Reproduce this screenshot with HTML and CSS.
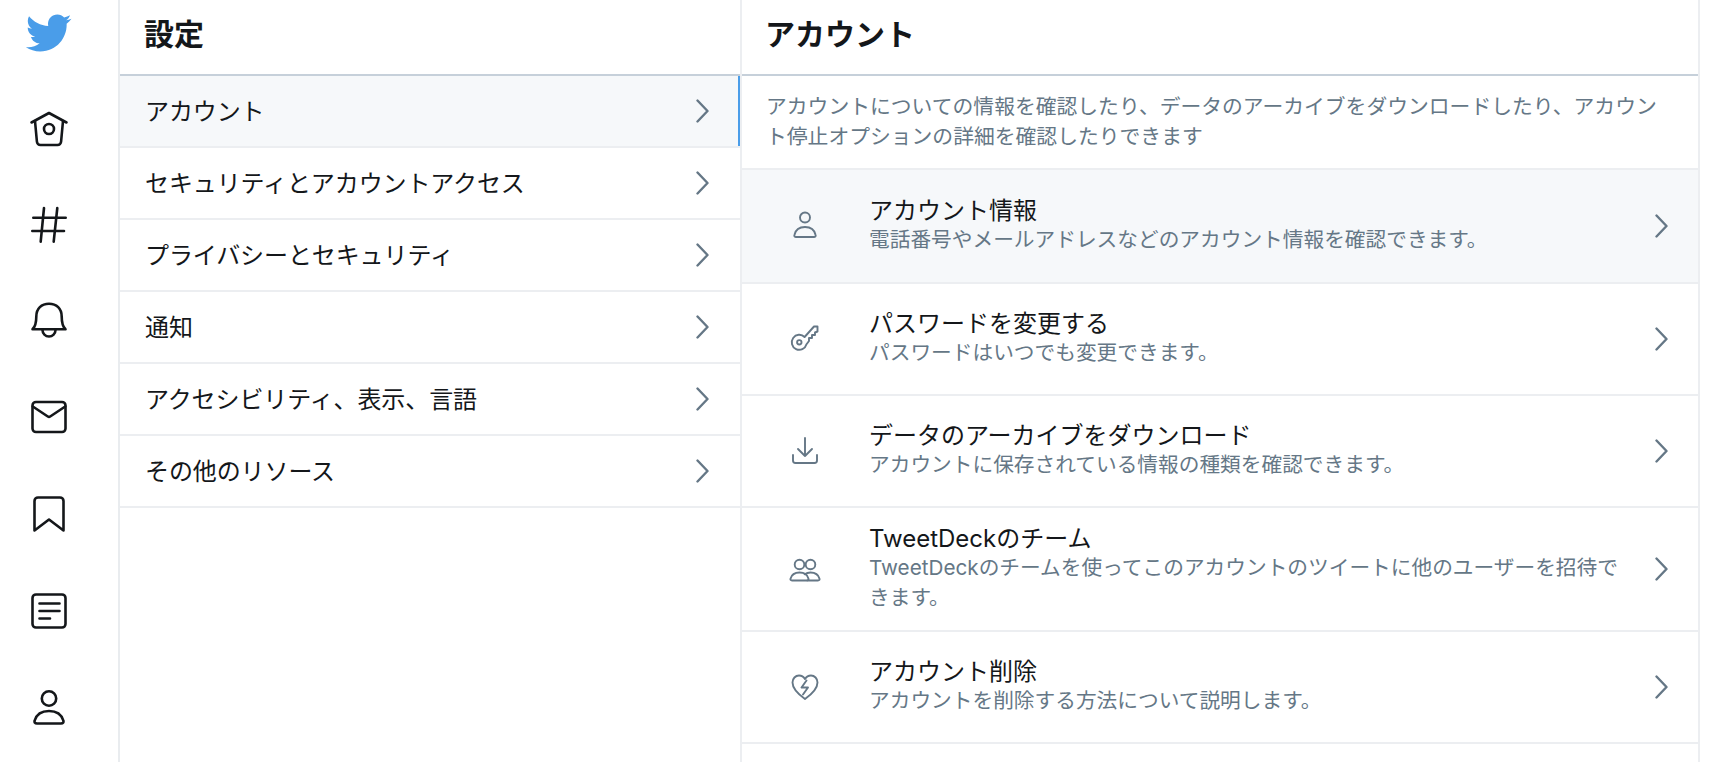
FILE: index.html
```html
<!DOCTYPE html>
<html lang="ja">
<head>
<meta charset="utf-8">
<title>設定</title>
<link rel="stylesheet" href="styles.css">
</head>
<body>
<div class="app">
  <nav class="rail">
    <div class="brand">
      <svg class="bird" viewBox="0 0 24 24"><path d="M23.643 4.937c-.835.37-1.732.62-2.675.733.962-.576 1.7-1.49 2.048-2.578-.9.534-1.897.922-2.958 1.13-.85-.904-2.06-1.47-3.4-1.47-2.572 0-4.658 2.086-4.658 4.66 0 .364.042.718.12 1.06-3.873-.195-7.304-2.05-9.602-4.868-.4.69-.63 1.49-.63 2.342 0 1.616.823 3.043 2.072 3.878-.764-.025-1.482-.234-2.11-.583v.06c0 2.257 1.605 4.14 3.737 4.568-.392.106-.803.162-1.227.162-.3 0-.593-.028-.877-.082.593 1.85 2.313 3.198 4.352 3.234-1.595 1.25-3.604 1.995-5.786 1.995-.376 0-.747-.022-1.112-.065 2.062 1.323 4.51 2.093 7.14 2.093 8.57 0 13.255-7.098 13.255-13.254 0-.2-.005-.402-.014-.602.91-.658 1.7-1.477 2.323-2.41z"/></svg>
    </div>
    <div class="rail-item"><svg class="rail-icon" viewBox="0 0 40 40"><path d="M2.500 13.500 20 4l17.500 9.500"/><path d="M6 12l1.900 20.500a3.600 3.600 0 0 0 3.600 3.500h17a3.600 3.600 0 0 0 3.600-3.500L34 12"/><circle cx="20" cy="20" r="5"/></svg></div>
    <div class="rail-item"><svg class="rail-icon" viewBox="0 0 40 40"><path d="M15 3l-3.300 33.700M28.300 3 24.700 36.700M4.300 12.700H36.700M3.300 26H35"/></svg></div>
    <div class="rail-item"><svg class="rail-icon" viewBox="0 0 40 40"><path d="M3.500 28.300C6.500 25.500 7.300 22 7.300 15.500 7.300 7.500 12.500 2.800 20 2.800s12.700 4.700 12.700 12.700c0 6.500.8 10 3.800 12.800z"/><path d="M13.500 29a6.500 6.500 0 0 0 13 0"/></svg></div>
    <div class="rail-item"><svg class="rail-icon" viewBox="0 0 40 40"><rect x="3.500" y="4" width="33" height="30" rx="3.500"/><path d="M3.800 8.500 18.800 18.500a2.200 2.200 0 0 0 2.400 0L36.200 8.500"/></svg></div>
    <div class="rail-item"><svg class="rail-icon" viewBox="0 0 40 40"><path d="M5.500 36.500V7a3.500 3.500 0 0 1 3.500-3.500h22A3.500 3.500 0 0 1 34.500 7v29.500L20 25.500z"/></svg></div>
    <div class="rail-item"><svg class="rail-icon" viewBox="0 0 40 40"><rect x="3.500" y="3.500" width="33" height="33" rx="3.500"/><path d="M10.500 12.500h20M10.500 20h20M10.500 27.500H21"/></svg></div>
    <div class="rail-item"><svg class="rail-icon" viewBox="0 0 40 40"><circle cx="20" cy="11.500" r="7.200"/><path d="M8 36.500c-2 0-3-1.200-2.300-3C7.500 27.500 13 24 20 24s12.500 3.500 14.300 9.500c.7 1.800-.3 3-2.300 3z"/></svg></div>
  </nav>

  <section class="menu">
    <h1 class="head">設定</h1>
    <ul class="menu-list">
      <li class="menu-row is-active"><span class="menu-label">アカウント</span><svg class="chev" viewBox="0 0 13 24"><path d="M1.500 1.500 11.500 12l-10 10.500"/></svg></li>
      <li class="menu-row"><span class="menu-label">セキュリティとアカウントアクセス</span><svg class="chev" viewBox="0 0 13 24"><path d="M1.500 1.500 11.500 12l-10 10.500"/></svg></li>
      <li class="menu-row"><span class="menu-label">プライバシーとセキュリティ</span><svg class="chev" viewBox="0 0 13 24"><path d="M1.500 1.500 11.500 12l-10 10.500"/></svg></li>
      <li class="menu-row"><span class="menu-label">通知</span><svg class="chev" viewBox="0 0 13 24"><path d="M1.500 1.500 11.500 12l-10 10.500"/></svg></li>
      <li class="menu-row"><span class="menu-label">アクセシビリティ、表示、言語</span><svg class="chev" viewBox="0 0 13 24"><path d="M1.500 1.500 11.500 12l-10 10.500"/></svg></li>
      <li class="menu-row"><span class="menu-label">その他のリソース</span><svg class="chev" viewBox="0 0 13 24"><path d="M1.500 1.500 11.500 12l-10 10.500"/></svg></li>
    </ul>
  </section>

  <section class="detail">
    <h2 class="head">アカウント</h2>
    <p class="intro">アカウントについての情報を確認したり、データのアーカイブをダウンロードしたり、アカウント停止オプションの詳細を確認したりできます</p>
    <ul class="detail-list">
      <li class="row is-first">
        <svg class="row-icon" viewBox="0 0 32 32"><circle cx="16" cy="7.500" r="5"/><path d="M7 27c-1.300 0-2-.8-1.600-2C6.500 20 10.500 17 16 17s9.500 3 10.600 8c.4 1.200-.3 2-1.600 2z"/></svg>
        <div class="row-text"><div class="row-title">アカウント情報</div><div class="row-sub">電話番号やメールアドレスなどのアカウント情報を確認できます。</div></div>
        <svg class="chev" viewBox="0 0 13 24"><path d="M1.500 1.500 11.500 12l-10 10.500"/></svg>
      </li>
      <li class="row">
        <svg class="row-icon" viewBox="0 0 32 32"><path d="M15.600 14 25 3.500h3.500v5l-2.500 1v2.500h-3v3h-3v3l-2.500 3.300A7.500 7.500 0 1 1 15.600 14z"/><circle cx="10.300" cy="19.300" r="2.200"/></svg>
        <div class="row-text"><div class="row-title">パスワードを変更する</div><div class="row-sub">パスワードはいつでも変更できます。</div></div>
        <svg class="chev" viewBox="0 0 13 24"><path d="M1.500 1.500 11.500 12l-10 10.500"/></svg>
      </li>
      <li class="row">
        <svg class="row-icon" viewBox="0 0 32 32"><path d="M16 3v18M9 14l7 7 7-7"/><path d="M4 20v5.500A2.500 2.500 0 0 0 6.500 28h19a2.500 2.500 0 0 0 2.500-2.500V20"/></svg>
        <div class="row-text"><div class="row-title">データのアーカイブをダウンロード</div><div class="row-sub">アカウントに保存されている情報の種類を確認できます。</div></div>
        <svg class="chev" viewBox="0 0 13 24"><path d="M1.500 1.500 11.500 12l-10 10.500"/></svg>
      </li>
      <li class="row is-tall">
        <svg class="row-icon" viewBox="0 0 32 32"><circle cx="10.500" cy="11.500" r="4.800"/><circle cx="21.500" cy="11.500" r="4.800"/><path d="M3 27.500c-1.200 0-1.800-.7-1.500-1.800C2.500 22 6 19.500 10.500 19.500s8 2.500 9 6.200c.3 1.100-.3 1.800-1.500 1.800z"/><path d="M18.500 27.500H29c1.200 0 1.800-.7 1.500-1.800-1-3.700-4.500-6.200-9-6.200-2.200 0-4.200.6-5.800 1.700"/></svg>
        <div class="row-text"><div class="row-title">TweetDeckのチーム</div><div class="row-sub">TweetDeckのチームを使ってこのアカウントのツイートに他のユーザーを招待できます。</div></div>
        <svg class="chev" viewBox="0 0 13 24"><path d="M1.500 1.500 11.500 12l-10 10.500"/></svg>
      </li>
      <li class="row">
        <svg class="row-icon" viewBox="0 0 32 32"><path d="M16 28C9 23 3.500 18 3.500 11.500 3.500 7.500 6.500 4.500 10 4.500c2.500 0 4.700 1.300 6 3.500 1.300-2.200 3.500-3.500 6-3.500 3.500 0 6.500 3 6.500 7C28.500 18 23 23 16 28z"/><path d="M17.500 9.500 12.500 16.500h6.500L14 23.500"/></svg>
        <div class="row-text"><div class="row-title">アカウント削除</div><div class="row-sub">アカウントを削除する方法について説明します。</div></div>
        <svg class="chev" viewBox="0 0 13 24"><path d="M1.500 1.500 11.500 12l-10 10.500"/></svg>
      </li>
    </ul>
  </section>
</div>
</body>
</html>
```

FILE: styles.css
```css
* { box-sizing: border-box; }
html, body { margin: 0; height: 762px; overflow: hidden; background: #fff; }
body {
  font-family: Inter, "Noto Sans CJK JP", sans-serif;
  color: #14171a;
}
ul { list-style: none; margin: 0; padding: 0; }

.app { display: flex; height: 762px; }

.rail {
  width: 120px;
  flex: none;
  border-right: 2px solid #e9ecef;
  display: flex;
  flex-direction: column;
  align-items: flex-start;
}
.brand { height: 80.5px; width: 96px; display: flex; justify-content: center; padding-top: 9px; }
.bird { width: 48px; height: 48px; fill: #4a9de9; }
.rail-item { height: 96.4px; width: 98px; flex: none; display: flex; align-items: center; justify-content: center; }
.rail-icon { width: 40px; height: 40px; fill: none; stroke: #14171a; stroke-width: 2.6; stroke-linejoin: round; stroke-linecap: round; }

.menu { width: 620px; flex: none; display: flex; flex-direction: column; }
.head {
  margin: 0;
  height: 76px;
  flex: none;
  padding: 16px 0 0 24px;
  font-size: 30px;
  line-height: 36px;
  font-weight: 700;
  border-bottom: 2px solid #c6d0da;
}
.detail .head { padding-left: 23px; }
.menu-row {
  height: 72px;
  display: flex;
  align-items: center;
  justify-content: space-between;
  padding: 0 31px 0 25px;
  font-size: 24px;
  border-bottom: 2px solid #eceef1;
}
.menu-label { padding-bottom: 4px; letter-spacing: -0.1px; }
.menu-row.is-active { background: #f6f8fa; box-shadow: inset -2px 0 0 #4a9de9; }

.chev { width: 13px; height: 24px; flex: none; fill: none; stroke: #657786; stroke-width: 2.4; stroke-linecap: round; stroke-linejoin: round; }

.detail {
  width: 960px;
  flex: none;
  display: flex;
  flex-direction: column;
  border-left: 2px solid #eceef1;
  border-right: 2px solid #eceef1;
}
.intro {
  margin: 0;
  height: 94px;
  flex: none;
  padding: 16px 34px 0 24px;
  font-size: 20.8px;
  line-height: 30px;
  color: #657786;
  border-bottom: 2px solid #eceef1;
}
.row {
  height: 112px;
  display: flex;
  align-items: center;
  padding-left: 47px;
  padding-right: 30px;
  border-bottom: 2px solid #eceef1;
}
.row.is-first { height: 114px; background: #f6f8fa; }
.row.is-tall { height: 124px; }
.row-icon { width: 32px; height: 32px; flex: none; fill: none; stroke: #657786; stroke-width: 1.9; stroke-linecap: round; stroke-linejoin: round; }
.row-text { flex: 1; min-width: 0; margin-left: 48px; margin-right: 27px; padding-bottom: 2px; }
.row-title { font-size: 24px; line-height: 30px; }
.row-sub { font-size: 20.7px; line-height: 30px; margin-top: -1px; color: #657786; }
```
